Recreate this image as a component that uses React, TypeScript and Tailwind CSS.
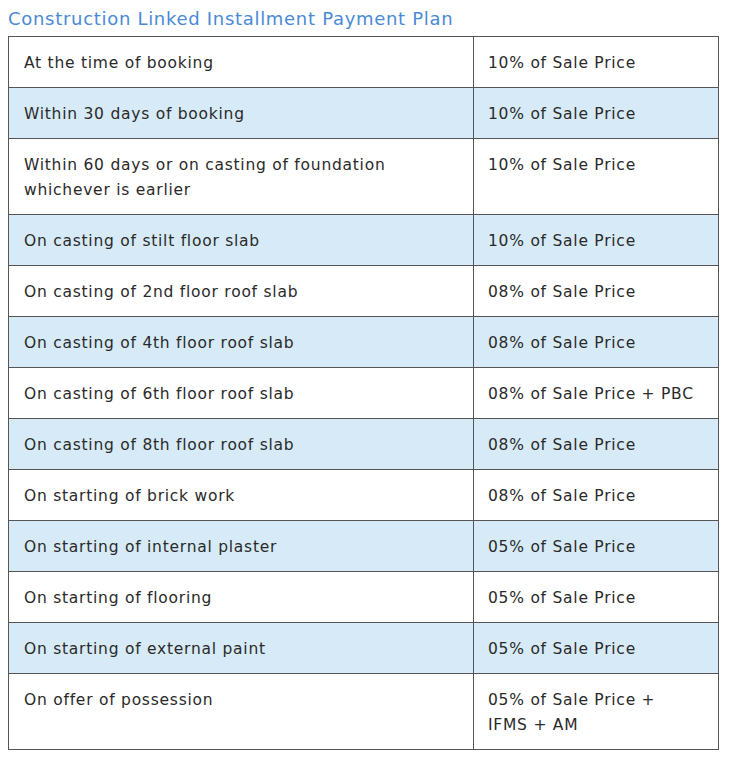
import React from 'react';

const rows: { stage: string; amount: React.ReactNode }[] = [
  { stage: 'At the time of booking', amount: '10% of Sale Price' },
  { stage: 'Within 30 days of booking', amount: '10% of Sale Price' },
  { stage: 'Within 60 days or on casting of foundation whichever is earlier', amount: '10% of Sale Price' },
  { stage: 'On casting of stilt floor slab', amount: '10% of Sale Price' },
  { stage: 'On casting of 2nd floor roof slab', amount: '08% of Sale Price' },
  { stage: 'On casting of 4th floor roof slab', amount: '08% of Sale Price' },
  { stage: 'On casting of 6th floor roof slab', amount: '08% of Sale Price + PBC' },
  { stage: 'On casting of 8th floor roof slab', amount: '08% of Sale Price' },
  { stage: 'On starting of brick work', amount: '08% of Sale Price' },
  { stage: 'On starting of internal plaster', amount: '05% of Sale Price' },
  { stage: 'On starting of flooring', amount: '05% of Sale Price' },
  { stage: 'On starting of external paint', amount: '05% of Sale Price' },
  {
    stage: 'On offer of possession',
    amount: (
      <>
        05% of Sale Price +<br />
        IFMS + AM
      </>
    ),
  },
];

export default function App() {
  return (
    <div className="min-h-screen bg-white px-2 pt-[6px] font-['DejaVu_Sans',Verdana,sans-serif]">
      <h2 className="text-[18px] leading-[26px] tracking-[0.7px] text-[#4a8ad6] mb-[4px]">
        Construction Linked Installment Payment Plan
      </h2>
      <table className="w-[711px] border-collapse border border-[#555] text-[15.5px] leading-[25px] tracking-[0.75px] text-[#2a2a2a]">
        <tbody>
          {rows.map((row, index) => (
            <tr key={index} className={index % 2 === 1 ? 'bg-[#d6eaf7]' : 'bg-white'}>
              <td className="w-[465px] border border-[#555] pl-[15px] pr-[60px] pt-[14px] pb-[11px] align-top">
                {row.stage}
              </td>
              <td className="border border-[#555] pl-[14px] pr-[4px] pt-[14px] pb-[11px] align-top whitespace-nowrap">
                {row.amount}
              </td>
            </tr>
          ))}
        </tbody>
      </table>
    </div>
  );
}
